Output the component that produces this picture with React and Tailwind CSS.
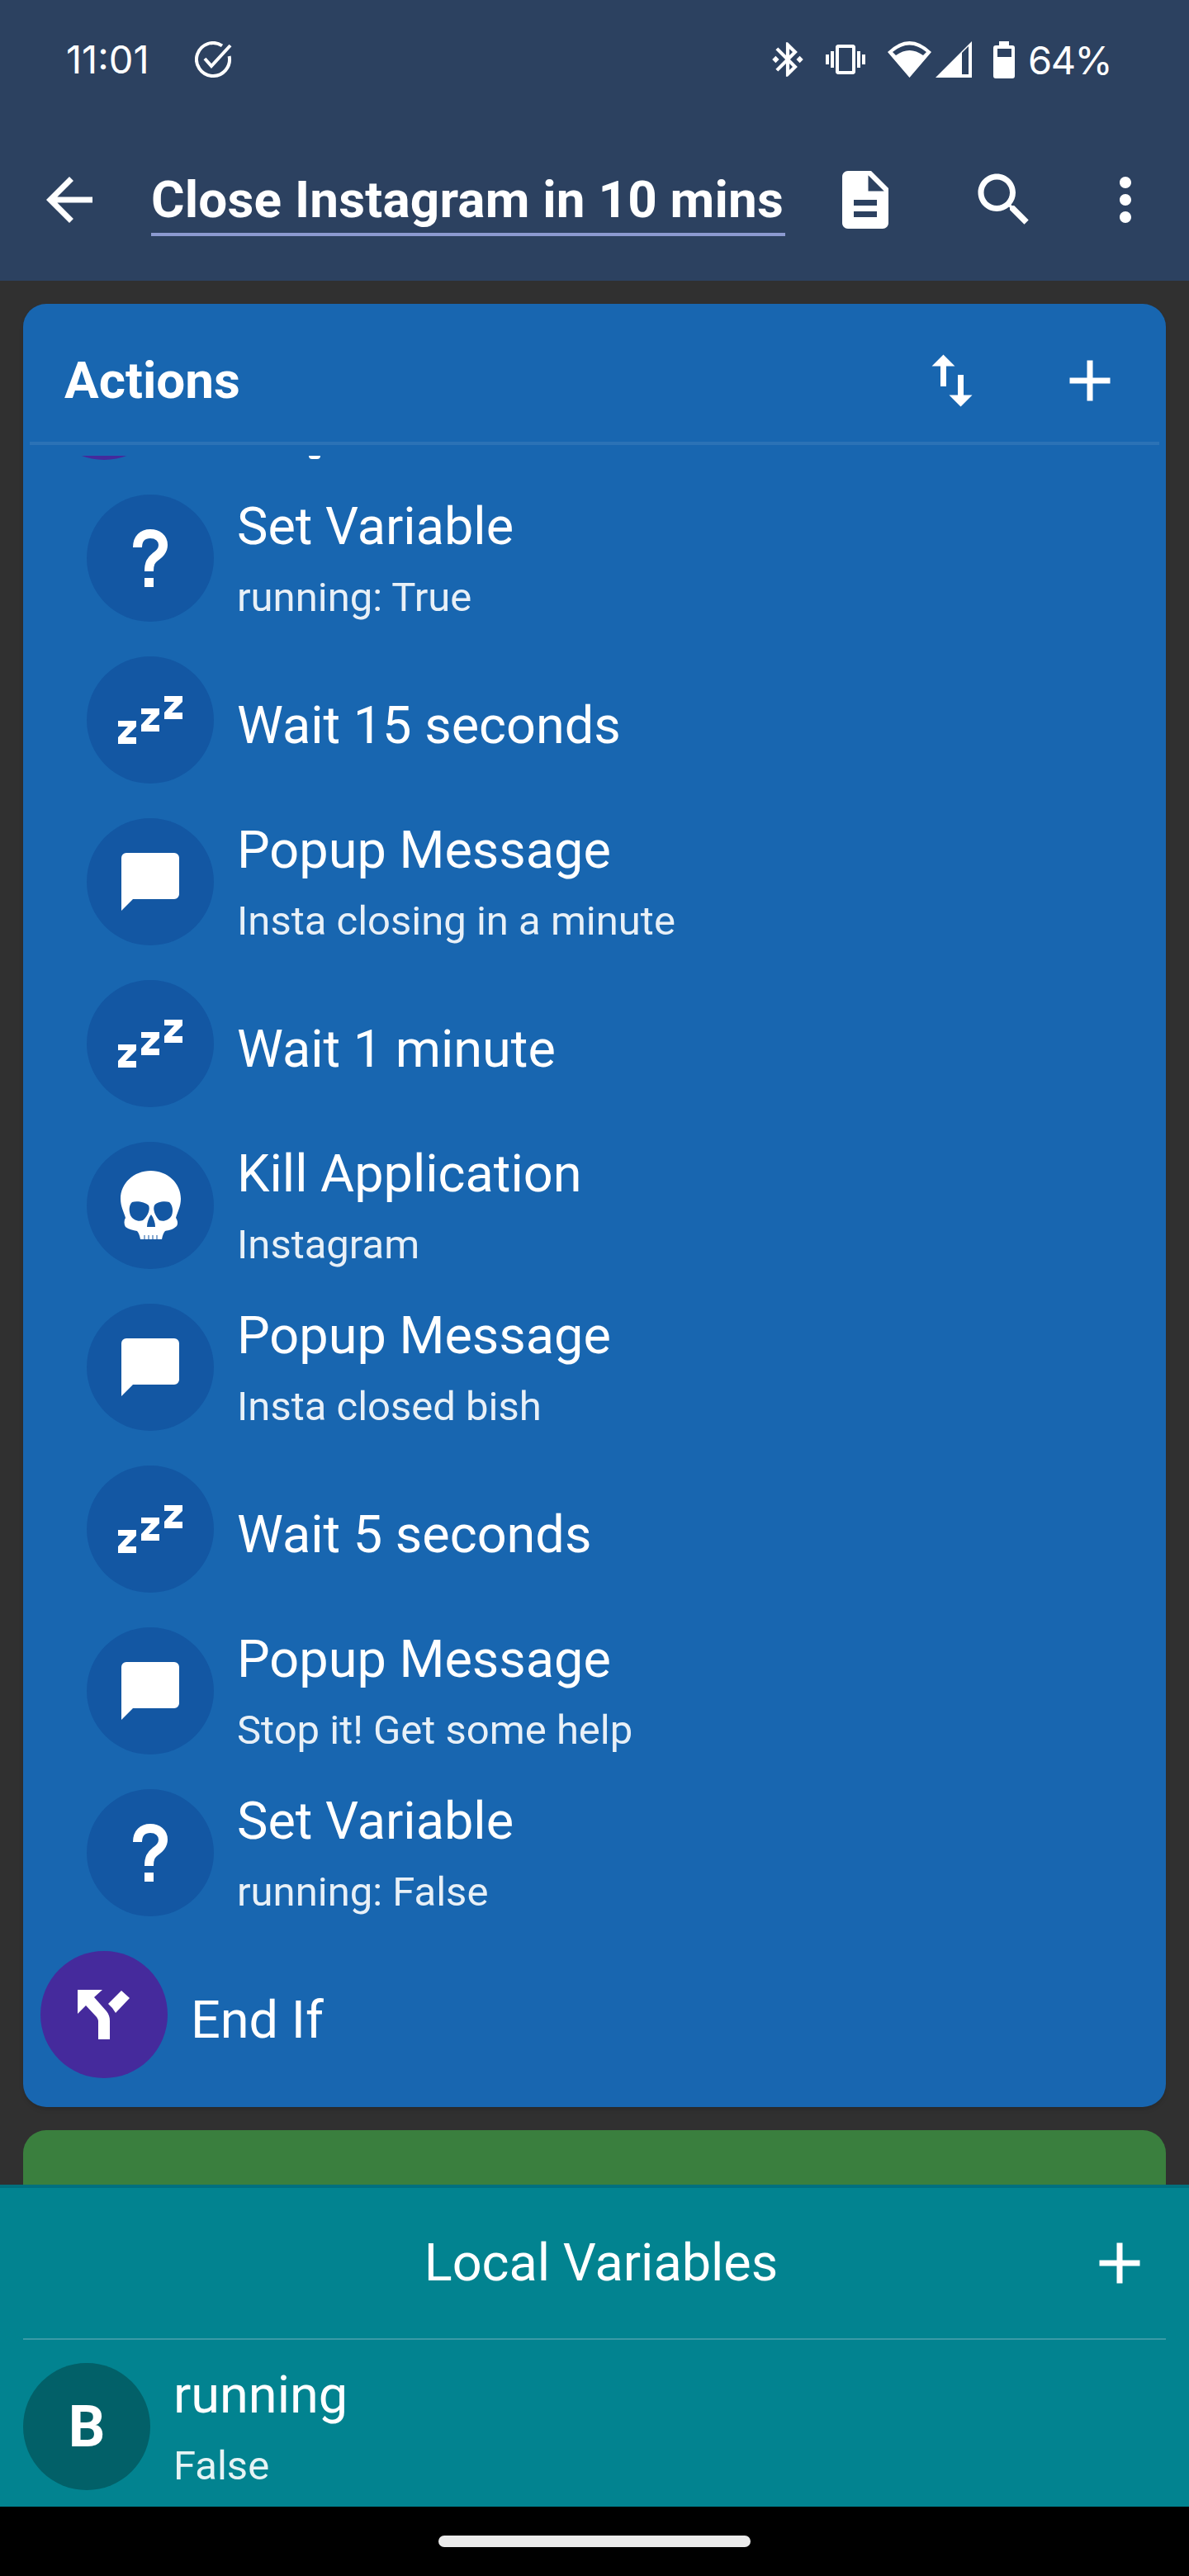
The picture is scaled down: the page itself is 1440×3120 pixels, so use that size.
import React from 'react';

const ROBOTO = "font-['Roboto',sans-serif]";

// Material icon paths, drawn on a 24 unit grid
const ARROW_BACK = 'M20 11H7.83l5.59-5.59L12 4l-8 8 8 8 1.41-1.41L7.83 13H20v-2z';
const DESCRIPTION = 'M14 2H6c-1.1 0-1.99.9-1.99 2L4 20c0 1.1.89 2 1.99 2H18c1.1 0 2-.9 2-2V8l-6-6zm2 16H8v-2h8v2zm0-4H8v-2h8v2zm-3-5V3.5L18.5 9H13z';
const SEARCH = 'M15.5 14h-.79l-.28-.27C15.41 12.59 16 11.11 16 9.5 16 5.91 13.09 3 9.5 3S3 5.91 3 9.5 5.91 16 9.5 16c1.61 0 3.09-.59 4.23-1.57l.27.28v.79l5 4.99L20.49 19l-4.99-5zm-6 0C7.01 14 5 11.99 5 9.5S7.01 5 9.5 5 14 7.01 14 9.5 11.99 14 9.5 14z';
const MORE_VERT = 'M12 8c1.1 0 2-.9 2-2s-.9-2-2-2-2 .9-2 2 .9 2 2 2zm0 2c-1.1 0-2 .9-2 2s.9 2 2 2 2-.9 2-2-.9-2-2-2zm0 6c-1.1 0-2 .9-2 2s.9 2 2 2 2-.9 2-2-.9-2-2-2z';
const SWAP_VERT = 'M16 17.01V10h-2v7.01h-3L15 21l4-3.99h-3zM9 3L5 6.99h3V14h2V6.99h3L9 3z';
const ADD = 'M19 13h-6v6h-2v-6H5v-2h6V5h2v6h6v2z';
const VIBRATION = 'M0 15h2V9H0v6zm3 2h2V7H3v10zm19-8v6h2V9h-2zm-3 8h2V7h-2v10zM16.5 3h-9C6.67 3 6 3.67 6 4.5v15c0 .83.67 1.5 1.5 1.5h9c.83 0 1.5-.67 1.5-1.5v-15c0-.83-.67-1.5-1.5-1.5zM16 19H8V5h8v14z';
const BLUETOOTH = 'M7 12l-2-2-2 2 2 2 2-2zm10.71-4.29L12 2h-1v7.59L6.41 5 5 6.41 10.59 12 5 17.59 6.41 19 11 14.41V22h1l5.71-5.71-4.3-4.29 4.3-4.29zM13 5.83l1.88 1.88L13 9.59V5.83zm1.88 10.46L13 18.17v-3.76l1.88 1.88zM19 10l-2 2 2 2 2-2-2-2z';

const Mi = ({ d, size = 84, className = '' }) => (
  <svg className={`shrink-0 ${className}`} width={size} height={size} viewBox="0 0 24 24" fill="white">
    <path d={d} />
  </svg>
);

const CheckIcon = () => (
  <svg className="ml-[55px] shrink-0" width="46" height="44" viewBox="0 0 46 44" fill="none" stroke="white" strokeWidth="4">
    <path d="M33 5.3A20 20 0 1 0 41.6 18" />
    <path d="M12 21l8 9L43 5" />
  </svg>
);

const WifiIcon = () => (
  <svg className="ml-[27px] shrink-0" width="53" height="44" viewBox="0 0 53 44" fill="white">
    <path fillRule="evenodd" d="M0 13Q26.5-13 53 13L26.5 44ZM6 13Q26.5-4 47 13L43 17Q26.5 5 10 17Z" />
  </svg>
);

const SignalIcon = () => (
  <svg className="ml-[5px] shrink-0" width="44" height="44" viewBox="0 0 44 44" fill="white">
    <path fillRule="evenodd" d="M0 44L44 0V44ZM32 14L40 6V40H32Z" />
  </svg>
);

const BatteryIcon = () => (
  <svg className="ml-[26px] shrink-0" width="26" height="45" viewBox="0 0 26 45" fill="white">
    <path fillRule="evenodd" d="M7 0H19V5H23A3 3 0 0 1 26 8V42A3 3 0 0 1 23 45H3A3 3 0 0 1 0 42V8A3 3 0 0 1 3 5H7ZM5 9V19H22V9Z" />
  </svg>
);

const ZzzIcon = () => (
  <svg width="78" height="58" viewBox="0 0 78 58" fill="white">
    <path d="M0 30h22v7L9 50h13v8H0v-8l12-13H0zM28 15h22v7L37 35h13v8H28v-8l12-13H28zM56 0h22v7L65 20h13v8H56v-8l12-13H56z" />
  </svg>
);

const BubbleIcon = () => (
  <svg width="70" height="70" viewBox="0 0 70 70" fill="white">
    <path d="M6 0h58a6 6 0 0 1 6 6v44a6 6 0 0 1-6 6H14L0 70V6a6 6 0 0 1 6-6z" />
  </svg>
);

const QuestionIcon = () => (
  <svg width="42" height="70" viewBox="0 0 42 70">
    <path d="M5.5 22C5.5 11 12 5.5 21 5.5C30 5.5 36.5 11 36.5 19C36.5 26 32 29.5 27 33.5C22 37.5 19.5 41 19.5 51" fill="none" stroke="white" strokeWidth="11" />
    <rect x="14" y="59" width="11" height="11" fill="white" />
  </svg>
);

const SkullIcon = () => (
  <svg width="73" height="84" viewBox="0 0 73 84">
    <path
      fill="white"
      fillRule="evenodd"
      d="M36.5 0C16 0 0 15 0 34C0 43 4 50 6 57C4 60 4 65 6 68C10 71 15 72 20 73C22 75 23 78 24 83H50C51 78 52 75 54 73C59 72 64 71 68 67C70 64 69 60 67 57C69 50 73 43 73 34C73 15 57 0 36.5 0ZM14 38C20 36 30 38 34 42C36 46 34 54 27 60C22 62 15 60 12 54C10 48 10 42 14 38ZM59 38C53 36 43 38 41 42C39 46 41 54 47 60C52 62 59 60 62 54C64 48 63 42 59 38ZM37 53C40 57 42 63 42 68H32C32 63 34 57 37 53Z"
    />
    <path d="M29 78V84M34 78V84M39 78V84M44 78V84" stroke="#1357a3" strokeWidth="1" />
  </svg>
);

const BranchIcon = () => (
  <svg width="64" height="60" viewBox="0 0 64 60" fill="white">
    <path d="M0 0H30L20 9L35 26C38 30 39 33 39 38V60H25V38C25 36 24 35 23 33L10 19L0 29Z" />
    <path d="M37 17L53 1L63 10L46 28Q43 22 37 17Z" />
  </svg>
);

const RowText = ({ title, sub }) => (
  <div className={`flex flex-col ${sub ? 'pt-[4px]' : 'pt-[14px]'}`}>
    <div className="text-[63px] leading-[72px] text-white">{title}</div>
    {sub && <div className="mt-[20px] text-[49px] leading-[60px] text-white/90">{sub}</div>}
  </div>
);

const Row = ({ icon, title, sub, purple, nested = true }) => (
  <div className={`flex h-[196px] shrink-0 items-center ${nested ? 'pl-[77px]' : 'pl-[21px]'}`}>
    <div className={`mr-[28px] flex h-[154px] w-[154px] shrink-0 items-center justify-center rounded-full ${purple ? 'bg-[#452a9c]' : 'bg-[#1357a3]'}`}>
      {icon}
    </div>
    <RowText title={title} sub={sub} />
  </div>
);

export default function App() {
  return (
    <div className={`flex h-[3120px] w-[1440px] flex-col overflow-hidden bg-[#303030] ${ROBOTO}`}>
      {/* status bar + toolbar */}
      <div className="h-[340px] shrink-0 bg-[#2c4160]">
        <div className="flex h-[144px] items-center pl-[80px] pr-[95px] font-['Inter',sans-serif] text-white">
          <span className="text-[47px]">11:01</span>
          <CheckIcon />
          <div className="ml-auto flex items-center">
            <Mi d={BLUETOOTH} size={50} />
            <Mi d={VIBRATION} size={48} className="ml-[21px]" />
            <WifiIcon />
            <SignalIcon />
            <BatteryIcon />
            <span className="ml-[16px] w-[100px] text-[47px] leading-none tracking-[-1.5px]">64%</span>
          </div>
        </div>
        <div className="flex h-[196px] items-center pl-[42px]">
          <Mi d={ARROW_BACK} />
          <div className="ml-[57px] w-[768px] whitespace-nowrap border-b-[4px] border-[#8c9ad0] pb-[4px] pt-[8px] text-[62px] font-bold leading-[72px] tracking-[0.2px] text-white">
            Close Instagram in 10 mins
          </div>
          <Mi d={DESCRIPTION} className="ml-[55px]" />
          <Mi d={SEARCH} className="ml-[84px]" />
          <Mi d={MORE_VERT} className="ml-[63px]" />
        </div>
      </div>

      {/* cards */}
      <div className="min-h-0 flex-1 overflow-hidden px-[28px] pt-[28px]">
        <div className="flex h-[2184px] flex-col rounded-[28px] bg-[#1866b0] shadow-md">
          <div className="flex h-[167px] shrink-0 items-center pl-[50px] pr-[50px] pt-[18px] text-white">
            <span className="text-[62px] font-bold">Actions</span>
            <Mi d={SWAP_VERT} className="ml-auto" />
            <Mi d={ADD} className="ml-[83px]" />
          </div>
          <div className="mx-[8px] h-[4px] shrink-0 bg-[#2b72b6]" />
          <div className="mt-[13px] flex min-h-0 flex-1 flex-col overflow-hidden">
            {/* row scrolled away under the header, only its lower edge shows */}
            <div className="-mt-[170px] flex h-[196px] shrink-0 items-center pl-[21px]">
              <div className="h-[154px] w-[154px] shrink-0 rounded-full bg-[#452a9c]" />
              <div className="mb-[22px] ml-[171px] h-[4px] w-[14px] self-end rounded-b-full bg-white" />
            </div>
            <Row icon={<QuestionIcon />} title="Set Variable" sub="running: True" />
            <Row icon={<ZzzIcon />} title="Wait 15 seconds" />
            <Row icon={<BubbleIcon />} title="Popup Message" sub="Insta closing in a minute" />
            <Row icon={<ZzzIcon />} title="Wait 1 minute" />
            <Row icon={<SkullIcon />} title="Kill Application" sub="Instagram" />
            <Row icon={<BubbleIcon />} title="Popup Message" sub="Insta closed bish" />
            <Row icon={<ZzzIcon />} title="Wait 5 seconds" />
            <Row icon={<BubbleIcon />} title="Popup Message" sub="Stop it! Get some help" />
            <Row icon={<QuestionIcon />} title="Set Variable" sub="running: False" />
            <Row icon={<BranchIcon />} title="End If" purple nested={false} />
          </div>
        </div>
        <div className="mt-[28px] h-[100px] rounded-t-[28px] bg-[#3a7f3e]" />
      </div>

      {/* local variables drawer */}
      <div className="h-[390px] shrink-0 border-t-[4px] border-[#00707e] bg-[#028390]">
        <div className="relative flex h-[182px] items-center justify-center pl-[16px] text-[63px] text-white">
          Local Variables
          <Mi d={ADD} className="absolute right-[42px]" />
        </div>
        <div className="mx-[28px] h-[2px] bg-[#3a9aa6]" />
        <div className="flex items-center pl-[28px] pt-[27px]">
          <div className="mr-[28px] flex h-[154px] w-[154px] items-center justify-center rounded-full bg-[#026068] text-[70px] font-bold text-white">B</div>
          <RowText title="running" sub="False" />
        </div>
      </div>

      {/* nav bar */}
      <div className="flex h-[84px] shrink-0 items-center justify-center bg-black">
        <div className="h-[14px] w-[378px] rounded-full bg-[#ebebeb]" />
      </div>
    </div>
  );
}
